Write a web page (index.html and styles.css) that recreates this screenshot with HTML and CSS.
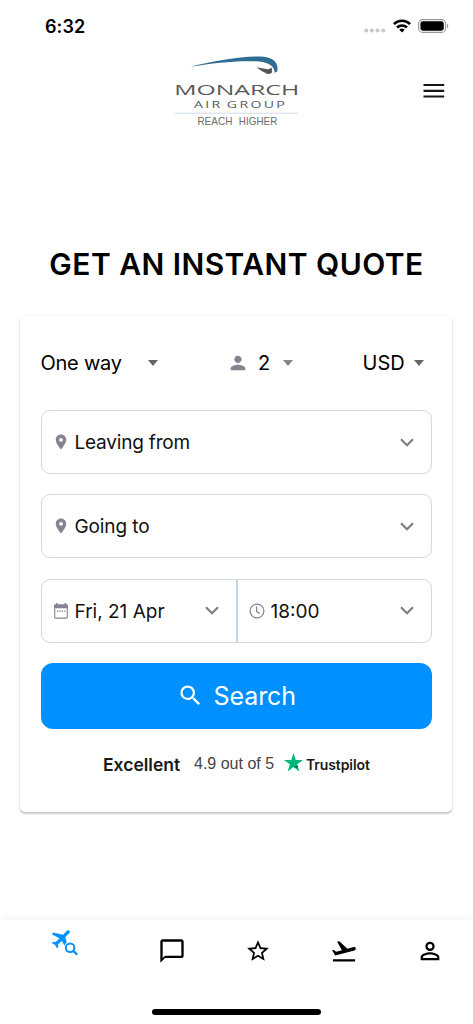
FILE: index.html
```html
<!DOCTYPE html>
<html lang="en">
<head>
<meta charset="utf-8">
<meta name="viewport" content="width=device-width, initial-scale=1">
<title>Monarch Air Group</title>
<link rel="stylesheet" href="styles.css">
</head>
<body>
<div class="screen">
  <div class="status">
    <span class="time">6:32</span>
    <div class="signals">
      <svg width="22" height="5" viewBox="0 0 22 5" fill="#c9c9c9"><circle cx="2.2" cy="2.5" r="2.1"/><circle cx="7.9" cy="2.5" r="2.1"/><circle cx="13.6" cy="2.5" r="2.1"/><circle cx="19.3" cy="2.5" r="2.1"/></svg>
      <svg class="wifi" width="18" height="14" viewBox="0 0 18 14" fill="none" stroke="#000" stroke-width="2.5"><path d="M.9 5.1a11.6 11.6 0 0 1 16.2 0"/><path d="M4 8.5a7.2 7.2 0 0 1 10 0"/><path d="M6.3 10.8a4 4 0 0 1 5.4 0L9 13.5z" fill="#000" stroke="none"/></svg>
      <svg class="battery" width="31" height="14" viewBox="0 0 31 14"><rect x=".6" y=".6" width="27" height="12.8" rx="4" fill="none" stroke="#999" stroke-width="1.1"/><rect x="2.4" y="2.3" width="23.4" height="9.4" rx="2.4"/><path d="M29 4.8c1.8.7 1.8 3.7 0 4.4z" fill="#999"/></svg>
    </div>
  </div>
  <header class="header">
    <svg class="logo" width="130" height="76" viewBox="170 53 130 76">
      <path d="M190 66.8C213 61 241 56 260 56.5C273 57 279 62 277.2 71.5L274.8 72.8C274.5 65.500 268 61.700 255 61.300C235 60.600 214 63 190 66.800Z" fill="#316d92"/>
      <path d="M256.500 67.300L267.500 69.300Q270 69.300 271.800 67.500L272 72.500Q270.500 74.500 267 73.700Q262 72 256.500 67.300Z" fill="#555"/>
      <g font-family="Open Sans, sans-serif" fill="#595959">
        <text x="174.200" y="95.200" font-size="15.200" textLength="125" lengthAdjust="spacingAndGlyphs">MONARCH</text>
        <text x="194" y="107.800" font-size="9.300" letter-spacing="1.500" word-spacing="-1" textLength="93" lengthAdjust="spacingAndGlyphs">AIR GROUP</text>
      </g>
      <path d="M175 113.200H298" stroke="#cfdde5" stroke-width="1"/>
      <g font-family="Liberation Sans, sans-serif" font-size="10.300" fill="#6c6c6c">
        <text x="197.400" y="124.800" textLength="35" lengthAdjust="spacingAndGlyphs">REACH</text>
        <text x="238.800" y="124.800" textLength="38.500" lengthAdjust="spacingAndGlyphs">HIGHER</text>
      </g>
    </svg>
    <svg class="menu" width="22" height="16" viewBox="0 0 22 16"><path d="M.5 2H21.2M.5 7.8H21.2M.5 13.5H21.2" stroke="#161616" stroke-width="2.2"/></svg>
  </header>
  <h1 class="title">GET AN INSTANT QUOTE</h1>
  <main class="card">
    <div class="options">
      <div class="option"><span class="trip">One way</span><i class="caret"></i></div>
      <div class="option"><svg class="person" width="22" height="22" viewBox="0 0 24 24" fill="#858391"><path d="M12 12c2.2 0 4-1.8 4-4s-1.8-4-4-4-4 1.8-4 4 1.8 4 4 4zm0 2c-2.7 0-8 1.3-8 4v2h16v-2c0-2.7-5.300-4-8-4z"/></svg><span class="count">2</span><i class="caret light"></i></div>
      <div class="option"><span class="currency">USD</span><i class="caret"></i></div>
    </div>
    <div class="field">
      <svg class="lead" width="18" height="18" viewBox="0 0 24 24" fill="#858391"><path d="M12 2C8.100 2 5 5.100 5 9c0 5.250 7 13 7 13s7-7.750 7-13c0-3.900-3.100-7-7-7zm0 9.500a2.500 2.500 0 1 1 0-5 2.500 2.500 0 0 1 0 5z"/></svg>
      <span class="leaving">Leaving from</span>
      <svg class="chevron" width="14" height="9" viewBox="0 0 14 9"><path d="M1 1.300l6 5.900 6-5.900"/></svg>
    </div>
    <div class="field">
      <svg class="lead" width="18" height="18" viewBox="0 0 24 24" fill="#858391"><path d="M12 2C8.100 2 5 5.100 5 9c0 5.250 7 13 7 13s7-7.750 7-13c0-3.900-3.100-7-7-7zm0 9.500a2.500 2.500 0 1 1 0-5 2.500 2.500 0 0 1 0 5z"/></svg>
      <span class="going">Going to</span>
      <svg class="chevron" width="14" height="9" viewBox="0 0 14 9"><path d="M1 1.300l6 5.900 6-5.900"/></svg>
    </div>
    <div class="field split">
      <div class="half date">
        <svg class="lead" width="18" height="18" viewBox="0 0 18 18"><path d="M2.700 4.500h12.600v10.700q0 .9-.9.900H3.600q-.9 0-.9-.9z" fill="none" stroke="#858391" stroke-width="1.100"/><path d="M2.100 3.200q0-1 1-1h11.800q1 0 1 1v3H2.100z" fill="#858391"/><path d="M4.700 1v2M13.300 1v2" stroke="#858391" stroke-width="1.400"/><path d="M5 9.100h1.400M7.300 9.100h1.400M9.600 9.100H11M11.900 9.100h1.400" stroke="#858391" stroke-width="1.200"/></svg>
        <span class="day">Fri, 21 Apr</span>
        <svg class="chevron" width="14" height="9" viewBox="0 0 14 9"><path d="M1 1.300l6 5.900 6-5.900"/></svg>
      </div>
      <div class="half clock">
        <svg class="lead" width="16" height="16" viewBox="0 0 16 16" fill="none" stroke="#858391" stroke-width="1.200"><circle cx="8" cy="8" r="6.900"/><path d="M7.600 3.600v5l3.300 2"/></svg>
        <span class="hour">18:00</span>
        <svg class="chevron" width="14" height="9" viewBox="0 0 14 9"><path d="M1 1.300l6 5.900 6-5.900"/></svg>
      </div>
    </div>
    <button class="search" type="button">
      <svg width="27" height="27" viewBox="0 0 24 24" fill="#fff"><path d="M15.500 14h-.79l-.28-.27A6.470 6.470 0 0 0 16 9.500 6.500 6.500 0 1 0 9.500 16c1.610 0 3.090-.59 4.230-1.570l.27.28v.79l5 4.990L20.490 19l-4.990-5zm-6 0C7.010 14 5 11.990 5 9.500S7.010 5 9.500 5 14 7.010 14 9.500 11.990 14 9.500 14z"/></svg>
      <span>Search</span>
    </button>
    <div class="trust">
      <span class="excellent">Excellent</span>
      <span class="score">4.9 out of 5</span>
      <svg class="tp-star" width="19" height="19" viewBox="0 0 19 19"><path d="M9.500 0l2.240 7H19l-5.860 4.300 2.240 7.200L9.500 14.100l-5.880 4.400 2.240-7.200L0 7h7.260z" fill="#00b67a"/><path d="M13.600 12.800l.5 1.700-4.600-.5z" fill="#005128"/></svg>
      <span class="brand">Trustpilot</span>
    </div>
  </main>
  <nav class="nav">
    <div class="tabs">
      <svg class="tab flights" width="28" height="28" viewBox="0 0 28 28"><g fill="#0090ff" stroke="#0090ff" stroke-width=".3"><path transform="translate(11.900 10.200) rotate(45) scale(1.040) translate(-11.500 -12)" d="M21 16v-2l-8-5V3.500c0-.83-.67-1.500-1.500-1.500S10 2.670 10 3.500V9l-8 5v2l8-2.500V19l-2 1.500V22l3.500-1 3.500 1v-1.500L13 19v-5.500l8 2.500z"/></g><circle cx="20.100" cy="19.800" r="6.200" fill="#fff"/><circle cx="20.100" cy="19.800" r="4.300" fill="none" stroke="#0090ff" stroke-width="2"/><path d="M23 22.700l4.200 3.900" stroke="#0090ff" stroke-width="2.300"/></svg>
      <svg class="tab chat" width="28" height="28" viewBox="0 0 24 24"><path d="M20 2H4c-1.100 0-2 .9-2 2v18l4-4h14c1.100 0 2-.9 2-2V4c0-1.100-.9-2-2-2zm0 14H6l-2 2V4h16v12z"/></svg>
      <svg class="tab star" width="26" height="26" viewBox="0 0 24 24"><path d="M22 9.240l-7.190-.62L12 2 9.190 8.630 2 9.240l5.460 4.730L5.820 21 12 17.270 18.180 21l-1.630-7.030L22 9.240zM12 15.400l-3.760 2.270 1-4.280-3.320-2.880 4.380-.38L12 6.100l1.710 4.040 4.380.38-3.320 2.880 1 4.280L12 15.400z"/></svg>
      <svg class="tab takeoff" width="28" height="28" viewBox="0 0 24 24"><path d="M2.500 19.100h19v1.900h-19zM22.070 9.640c-.21-.8-1.040-1.280-1.840-1.060L14.920 10l-6.900-6.430-1.930.51 4.140 7.170-4.970 1.330-1.970-1.540-1.450.39 2.590 4.490L21 11.490c.81-.23 1.280-1.050 1.070-1.850z"/></svg>
      <svg class="tab account" width="28" height="28" viewBox="0 0 24 24"><path d="M12 5.900a2.100 2.100 0 1 1 0 4.200 2.100 2.100 0 0 1 0-4.200m0 9c2.970 0 6.100 1.460 6.100 2.100v1.100H5.900V17c0-.64 3.130-2.100 6.100-2.100M12 4a4 4 0 1 0 0 8 4 4 0 0 0 0-8zm0 9c-2.670 0-8 1.340-8 4v3h16v-3c0-2.660-5.330-4-8-4z"/></svg>
    </div>
    <div class="home"></div>
  </nav>
</div>
</body>
</html>
```
FILE: styles.css
```css
* { box-sizing: border-box; }
body { margin: 0; background: #fff; color: #000; font-family: Inter, "Liberation Sans", sans-serif; }
svg { display: block; flex: none; }
.screen { height: 1024px; display: flex; flex-direction: column; overflow: hidden; }
.status { height: 53px; flex: none; display: flex; justify-content: space-between; padding: 0 24px 0 45px; }
.time { font-size: 18px; line-height: 22px; font-weight: 600; letter-spacing: .1px; margin-top: 16px; }
.signals { display: flex; align-items: flex-start; padding-top: 19px; }
.signals > svg:first-child { margin-top: 9px; }
.wifi { margin-left: 7px; }
.battery { margin-left: 7px; }
.header { height: 76px; flex: none; display: flex; justify-content: space-between; align-items: flex-start; padding: 0 28px 0 170px; }
.menu { margin-top: 30px; }
.title { margin: 115px 0 0; height: 40px; line-height: 40px; text-align: center; font-size: 30px; font-weight: 600; letter-spacing: .45px; white-space: nowrap; }
.card { flex: none; margin: 32px 21px 0 20px; height: 496px; padding: 25px 20px 0 20.500px; border-radius: 5px; display: flex; flex-direction: column; box-shadow: 0 2px 2px rgba(0,0,0,.2), 0 0 2px rgba(0,0,0,.12); }
.options { height: 44px; margin-bottom: 25px; display: flex; justify-content: space-between; align-items: center; font-size: 20px; }
.option { display: flex; align-items: center; white-space: nowrap; }
.option:last-child { padding-right: 8px; }
.caret { border: 5.500px solid transparent; border-top: 6px solid #666; border-bottom: 0; }
.caret.light { border-top-color: #858585; }
.trip { width: 107px; letter-spacing: -.25px; }
.person { margin-right: 9px; }
.count { width: 25px; }
.currency { width: 51.500px; }
.field { height: 64px; flex: none; margin-bottom: 20.300px; padding: 0 17px 0 10px; border: 1.500px solid #d0d9e5; border-radius: 9px; display: flex; align-items: center; font-size: 19px; color: #111; white-space: nowrap; }
.field span { padding-top: 1px; }
.lead { margin-right: 5px; }
.leaving { letter-spacing: -.2px; }
.going { letter-spacing: -.1px; }
.chevron { margin-left: auto; fill: none; stroke: #7d7d88; stroke-width: 2.200; }
.split { padding: 0; }
.half { height: 100%; display: flex; align-items: center; }
.date { width: 196px; padding: 0 17px 0 10px; border-right: 2px solid #c9d4e2; }
.clock { flex: 1; padding: 0 17px 0 11px; }
.clock .lead { margin-right: 6px; }
.search { height: 66px; flex: none; border: 0; border-radius: 12px; background: #0090ff; color: #fff; display: flex; align-items: center; justify-content: center; gap: 10px; font-family: inherit; font-size: 25px; letter-spacing: -.1px; padding: 0; }
.trust { height: 30px; margin-top: 20.500px; padding-left: 62.500px; display: flex; align-items: center; white-space: nowrap; color: #191919; }
.excellent { font-size: 17.500px; font-weight: 600; width: 91px; }
.score { font-size: 16px; width: 90px; color: #444; font-family: "Liberation Sans", sans-serif; }
.tp-star { margin-bottom: 3px; margin-right: 3px; }
.brand { font-size: 14px; font-weight: 600; letter-spacing: -.1px; }
.nav { margin-top: auto; height: 104px; flex: none; box-shadow: 0 -2px 8px rgba(0,0,0,.05); display: flex; flex-direction: column; align-items: center; justify-content: space-between; padding-bottom: 9px; }
.tabs { width: 100%; padding: 17px 29px 0 50px; display: flex; align-items: flex-start; }
.flights { margin: -9px 80px 0 0; }
.chat { margin-right: 59px; }
.star { margin: 1px 58.500px 0 0; }
.takeoff { margin-right: 58px; }
.home { width: 169px; height: 6px; border-radius: 3px; background: #000; }
```
